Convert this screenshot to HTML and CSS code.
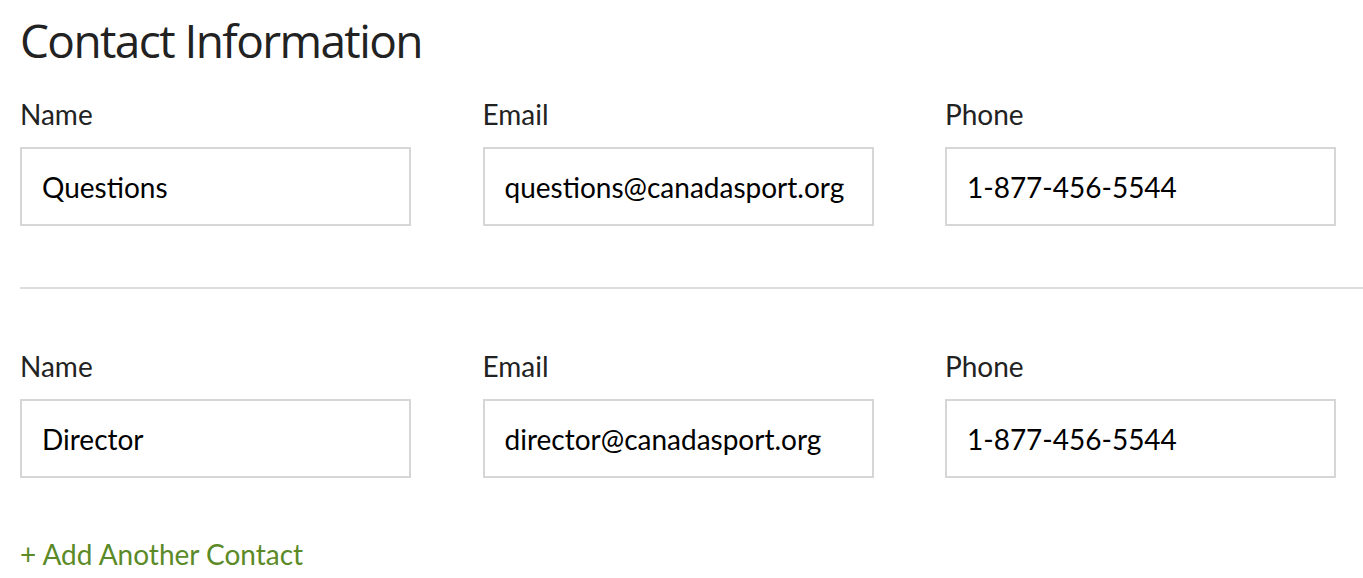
FILE: index.html
```html
<!DOCTYPE html>
<html lang="en">
<head>
  <meta charset="UTF-8">
  <title>Contact Information</title>
  <link rel="stylesheet" href="styles.css">
</head>
<body>
  <section class="contacts">
    <h2>Contact Information</h2>

    <div class="contact-row">
      <label>Name
        <input type="text" value="Questions">
      </label>
      <label>Email
        <input type="email" value="questions@canadasport.org">
      </label>
      <label>Phone
        <input type="tel" value="1-877-456-5544">
      </label>
    </div>

    <hr>

    <div class="contact-row">
      <label>Name
        <input type="text" value="Director">
      </label>
      <label>Email
        <input type="email" value="director@canadasport.org">
      </label>
      <label>Phone
        <input type="tel" value="1-877-456-5544">
      </label>
    </div>

    <a href="#" class="add-contact">+ Add Another Contact</a>
  </section>
</body>
</html>
```

FILE: styles.css
```css
body {
  margin: 0;
  padding: 0 0 0 20px;
  font-family: Lato, sans-serif;
  background-color: #fff;
  color: #222;
}

h2 {
  font-family: "Open Sans", sans-serif;
  font-weight: 400;
  font-size: 46px;
  letter-spacing: -1.6px;
  color: #222;
  margin: 10px 0 26px;
  line-height: 60px;
}

.contact-row {
  display: grid;
  grid-template-columns: repeat(3, 391px);
  column-gap: 71.5px;
}

.contact-row label {
  display: block;
  font-size: 28px;
  line-height: 36px;
  color: #222;
}

.contact-row input {
  display: block;
  box-sizing: border-box;
  width: 100%;
  height: 79px;
  margin-top: 15px;
  padding: 0 20px;
  border: 2px solid #d6d6d6;
  border-radius: 0;
  font-family: Lato, sans-serif;
  font-size: 28px;
  color: #000;
  background: #fff;
  outline: none;
}

hr {
  border: none;
  border-top: 2px solid #ddd;
  margin: 61px 0 59px;
}

.add-contact {
  display: inline-block;
  margin-top: 59px;
  font-size: 28px;
  line-height: 34px;
  color: #5b8a27;
  text-decoration: none;
}
```
